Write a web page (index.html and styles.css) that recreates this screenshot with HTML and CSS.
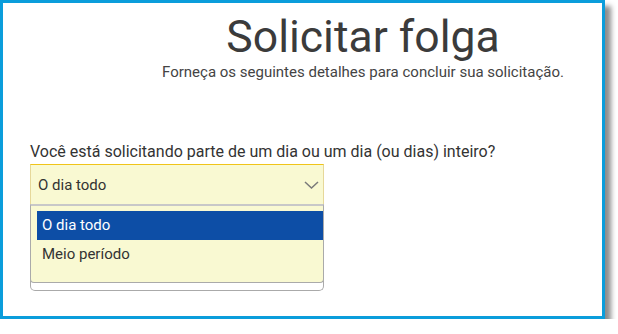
FILE: index.html
```html
<!DOCTYPE html>
<html>
<head>
    <title>Solicitar folga</title>
    <link rel="stylesheet" href="styles.css">
</head>
<body>
    <div class="frame">
        <div class="header">
            <h1 class="title">Solicitar folga</h1>
            <p class="subtitle">Forneça os seguintes detalhes para concluir sua solicitação.</p>
        </div>
        <div class="form">
            <label class="label">Você está solicitando parte de um dia ou um dia (ou dias) inteiro?</label>
            <div class="field">
                <div class="select">
                    <span>O dia todo</span>
                    <svg class="chevron" width="15" height="8" viewBox="0 0 15 8">
                        <path d="M1 1 L7.5 7 L14 1" fill="none" stroke="#7a7a7a" stroke-width="1.5"/>
                    </svg>
                </div>
                <div class="below"></div>
                <ul class="options">
                    <li class="option selected">O dia todo</li>
                    <li class="option">Meio período</li>
                </ul>
            </div>
        </div>
    </div>
</body>
</html>
```

FILE: styles.css
```css
body {
    margin: 0;
    background: #fff;
    font-family: Roboto, "Liberation Sans", sans-serif;
    color: #333;
}

.frame {
    box-sizing: border-box;
    width: 605px;
    height: 319px;
    border: 3px solid #0a9ddb;
    box-shadow: 6px 6px 5px rgba(0, 0, 0, 0.45);
    background: #fff;
}

.header {
    margin-left: 121px;
    text-align: center;
    padding-top: 8px;
}

.title {
    margin: 0;
    font-size: 44.5px;
    font-weight: 400;
    line-height: 52px;
    color: #3b3b3b;
}

.subtitle {
    margin: 0;
    font-size: 15px;
    line-height: 18px;
    color: #444;
}

.form {
    padding: 62px 0 0 27px;
}

.label {
    display: block;
    font-size: 16px;
    line-height: 18px;
    color: #333;
}

.field {
    position: relative;
    width: 294px;
    margin-top: 3px;
}

.select {
    box-sizing: border-box;
    height: 41px;
    display: flex;
    align-items: center;
    justify-content: space-between;
    padding: 0 4px 0 7px;
    background: #f9f9d2;
    border: 1px solid #e6d89a;
    border-top-color: #f0c419;
    font-size: 15px;
}

.below {
    height: 85px;
    border: 1px solid #aaa;
    border-top: none;
    border-radius: 0 0 5px 5px;
}

.options {
    position: absolute;
    top: 40px;
    left: 0;
    right: 0;
    margin: 0;
    padding: 5px 0 13px 6px;
    list-style: none;
    background: #f9f9d2;
    border: 1px solid #aaa;
    border-top-width: 2px;
    border-top-color: #c8c8c8;
    border-radius: 0 0 4px 4px;
    font-size: 15px;
}

.option {
    height: 29px;
    line-height: 29px;
    padding-left: 5px;
    color: #333;
}

.option.selected {
    background: #0d4ea6;
    color: #fff;
}
```
